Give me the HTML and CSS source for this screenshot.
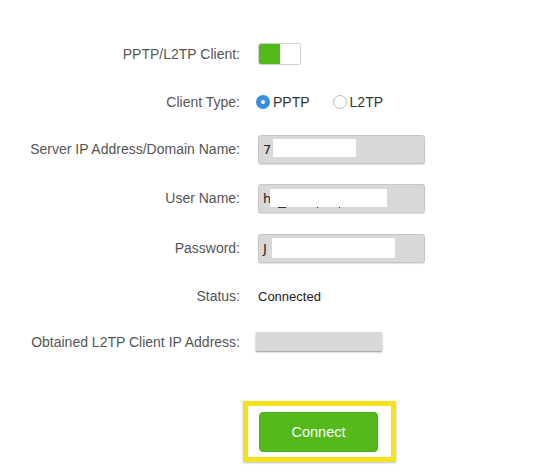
FILE: index.html
```html
<!DOCTYPE html>
<html>
<head>
<meta charset="utf-8">
<link rel="stylesheet" href="styles.css">
</head>
<body>
<div class="form">
  <div class="label">PPTP/L2TP Client:</div>
  <div class="value">
    <div class="toggle"><span class="toggle-on"></span><span class="toggle-off"></span></div>
  </div>

  <div class="label">Client Type:</div>
  <div class="value radios">
    <label class="radio"><span class="dot checked"></span>PPTP</label>
    <label class="radio"><span class="dot"></span>L2TP</label>
  </div>

  <div class="label">Server IP Address/Domain Name:</div>
  <div class="value">
    <div class="field"><span class="ftext">7</span><span class="mask mask1"></span></div>
  </div>

  <div class="label">User Name:</div>
  <div class="value">
    <div class="field"><span class="ftext">h</span><span class="mask mask2"></span><span class="peek peek1"></span><span class="peek peek2"></span><span class="peek peek3"></span></div>
  </div>

  <div class="label">Password:</div>
  <div class="value">
    <div class="field"><span class="ftext">J</span><span class="mask mask3"></span></div>
  </div>

  <div class="label">Status:</div>
  <div class="value status">Connected</div>

  <div class="label">Obtained L2TP Client IP Address:</div>
  <div class="value">
    <div class="readonly"></div>
  </div>
</div>
<div class="actions">
  <div class="highlight">
    <button class="connect">Connect</button>
  </div>
</div>
</body>
</html>
```

FILE: styles.css
```css
html, body {
  margin: 0;
  padding: 0;
  background: #ffffff;
}
body {
  font-family: "Liberation Sans", Arial, sans-serif;
  font-size: 14px;
  color: #555555;
  width: 546px;
  height: 473px;
  overflow: hidden;
}
.form {
  display: grid;
  grid-template-columns: 240px 1fr;
  column-gap: 18px;
  grid-template-rows: 48px 47px 48px 50px 50px 46px 45px;
  padding-top: 30px;
  align-items: center;
}
.label {
  text-align: right;
  color: #555555;
  white-space: nowrap;
}
.value {
  display: flex;
  align-items: center;
}
.toggle {
  display: flex;
  width: 41px;
  height: 20px;
  border: 1px solid #cfcfcf;
  border-radius: 3px;
  overflow: hidden;
  background: #fff;
}
.toggle-on {
  width: 21px;
  background: #52b91a;
}
.toggle-off {
  flex: 1;
  background: #ffffff;
}
.radios {
  margin-left: -2px;
  color: #333333;
}
.radio {
  display: flex;
  align-items: center;
  margin-right: 23px;
}
.dot {
  box-sizing: border-box;
  width: 14px;
  height: 14px;
  border-radius: 50%;
  border: 1px solid #bdbdbd;
  background: #fff;
  margin-right: 3px;
}
.dot.checked {
  border: none;
  background: #3b8de2;
  position: relative;
}
.dot.checked::after {
  content: "";
  position: absolute;
  left: 5px;
  top: 5px;
  width: 4px;
  height: 4px;
  border-radius: 50%;
  background: #fff;
}
.field {
  position: relative;
  box-sizing: border-box;
  width: 167px;
  height: 29px;
  background: #d8d8d8;
  border: 1px solid #c6c6c6;
  border-radius: 3px;
  box-shadow: 0 1px 1px rgba(0,0,0,0.12);
  display: flex;
  align-items: center;
  padding-left: 4px;
}
.ftext {
  font-family: "DejaVu Sans", sans-serif;
  font-size: 13px;
  color: #222222;
  white-space: pre;
}
.mask {
  position: absolute;
  background: #ffffff;
}
.mask1 { left: 14px; top: 3px; width: 83px; height: 18px; }
.mask2 { left: 11px; top: 4px; width: 117px; height: 18px; }
.mask3 { left: 13px; top: 3px; width: 123px; height: 20px; }
.peek {
  position: absolute;
  top: 22px;
  height: 1px;
  background: #333;
}
.peek1 { left: 19px; width: 8px; }
.peek2 { left: 58px; width: 1px; }
.peek3 { left: 80px; width: 1px; }
.status {
  color: #222222;
  font-size: 13px;
}
.readonly {
  width: 126px;
  height: 19px;
  margin-left: -2px;
  background: #d8d8d8;
  box-shadow: 0 1px 2px rgba(0,0,0,0.45);
  border-radius: 1px;
}
.actions {
  padding-top: 37px;
  padding-left: 243px;
}
.highlight {
  box-sizing: border-box;
  width: 153px;
  height: 61px;
  border: 5px solid #f4e11b;
  padding: 6px 0 0 11px;
  background: #fff;
  box-shadow: 0 1px 2px rgba(0,0,0,0.25);
}
.connect {
  width: 119px;
  height: 40px;
  background: #55b91b;
  border: 1px solid #4ea918;
  border-radius: 4px;
  color: #ffffff;
  font-family: "Liberation Sans", Arial, sans-serif;
  font-size: 14.5px;
  padding: 0;
}
```
